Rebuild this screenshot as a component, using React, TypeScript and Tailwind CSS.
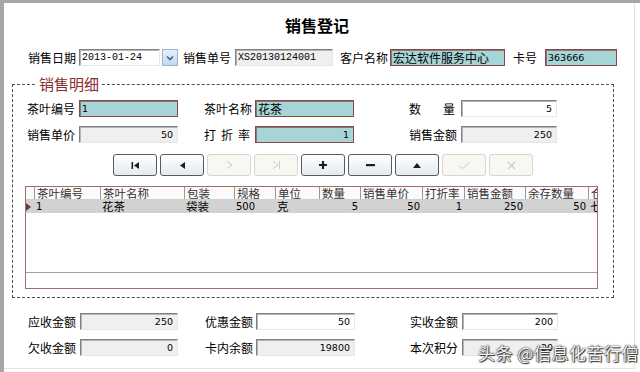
import React from "react";

type Variant = "teal" | "gray" | "white";

const cjk = "font-['Noto_Sans_CJK_SC','Noto_Sans',sans-serif]";

function Box({
  w, v, value = "", right = false, mono = false, small = false,
}: { w: string; v: Variant; value?: string; right?: boolean; mono?: boolean; small?: boolean }) {
  const look =
    v === "teal"
      ? "bg-[#a7d4d7] border border-[#8e4545] shadow-[inset_1px_1px_0_#7d7d7d]"
      : v === "gray"
      ? "bg-[#efefef] border border-t-[#7f7f7f] border-l-[#7f7f7f] border-r-[#e6e6e6] border-b-[#e6e6e6] shadow-[inset_1px_1px_0_#b5b5b5]"
      : "bg-white border border-t-[#7f7f7f] border-l-[#7f7f7f] border-r-[#e6e6e6] border-b-[#e6e6e6] shadow-[inset_1px_1px_0_#b5b5b5]";
  const font = mono
    ? "font-['Liberation_Mono',monospace] text-[10px]"
    : small
    ? "font-['DejaVu_Sans',sans-serif] text-[9.5px]"
    : `${cjk} text-[12px]`;
  return (
    <div
      className={`${w} h-[17px] ${look} ${font} flex items-center px-[2px] leading-none text-black ${
        right ? "justify-end pr-[4px]" : ""
      }`}
    >
      {value}
    </div>
  );
}

function Label({ text, spaced = false, w = "w-[48px]" }: { text: string; spaced?: boolean; w?: string }) {
  if (spaced) {
    return (
      <div className={`${w} flex justify-between text-[12px] text-black ${cjk} leading-none pr-[2px]`}>
        {text.split("").map((c, i) => (
          <span key={i}>{c}</span>
        ))}
      </div>
    );
  }
  return <div className={`${w} text-[12px] text-black ${cjk} leading-none whitespace-nowrap`}>{text}</div>;
}

function NavBtn({ on, children }: { on: boolean; children: React.ReactNode }) {
  return (
    <div
      className={`w-[44px] h-[22px] rounded-[3px] flex items-center justify-center ${
        on
          ? "border border-[#555c60] bg-gradient-to-b from-white to-[#e4eaee]"
          : "border border-[#d6d6ce] bg-[#f8f8f3]"
      }`}
    >
      {children}
    </div>
  );
}

const dark = "#1e1e1e";
const pale = "#c9c9c2";

const cols = [
  { t: "茶叶编号", w: 66, v: "1", r: false },
  { t: "茶叶名称", w: 84, v: "花茶", r: false },
  { t: "包装", w: 50, v: "袋装", r: false },
  { t: "规格", w: 41, v: "500", r: false },
  { t: "单位", w: 44, v: "克", r: false },
  { t: "数量", w: 41, v: "5", r: true },
  { t: "销售单价", w: 62, v: "50", r: true },
  { t: "打折率", w: 42, v: "1", r: true },
  { t: "销售金额", w: 61, v: "250", r: true },
  { t: "余存数量", w: 63, v: "50", r: true },
  { t: "仓库", w: 40, v: "七号库", r: false },
];

export default function App() {
  return (
    <div className="w-[640px] h-[372px] overflow-hidden bg-white border-t-[3px] border-l-[4px] border-[#a6a6a6] relative">
      <div className="w-[631px] h-[366px] border-r border-b border-[#e2e2e2]">
        {/* title */}
        <div className={`pt-[12px] h-[33px] text-center text-[16px] font-bold text-black ${cjk} leading-[20px] pr-[4px]`}>
          销售登记
        </div>

        {/* header row */}
        <div className="mt-[13px] ml-[24px] flex items-center h-[17px]">
          <Label text="销售日期" />
          <div className="ml-[3px]">
            <Box w="w-[81px]" v="white" value="2013-01-24" mono />
          </div>
          <div className="ml-[2px] w-[16px] h-[17px] border border-[#9db3cf] bg-gradient-to-b from-[#e6effb] to-[#c4d7f0] flex items-center justify-center">
            <svg width="8" height="6" viewBox="0 0 8 6">
              <path d="M1 1.5 L4 4.5 L7 1.5" fill="none" stroke="#3a5f99" strokeWidth="1.6" />
            </svg>
          </div>
          <div className="ml-[5px]">
            <Label text="销售单号" />
          </div>
          <div className="ml-[4px]">
            <Box w="w-[98px]" v="gray" value="XS20130124001" mono />
          </div>
          <div className="ml-[7px]">
            <Label text="客户名称" />
          </div>
          <div className="ml-[2px]">
            <Box w="w-[115px]" v="teal" value="宏达软件服务中心" />
          </div>
          <div className="ml-[8px]">
            <Label text="卡号" w="w-[24px]" />
          </div>
          <div className="ml-[8px]">
            <Box w="w-[72px]" v="teal" value="363666" small />
          </div>
        </div>

        {/* detail group */}
        <div className="relative mt-[18px] ml-[8px] w-[602px] h-[214px] border border-dashed border-[#4d4d4d]">
          <span className={`absolute -top-[11px] left-[24px] bg-white px-[2px] text-[15px] text-[#8a2d2d] ${cjk} leading-[20px]`}>
            销售明细
          </span>

          <div className="pt-[15px] pl-[14px] flex flex-col gap-[9px]">
            <div className="flex items-center h-[17px]">
              <Label text="茶叶编号" />
              <div className="ml-[4px]">
                <Box w="w-[99px]" v="teal" value="1" small />
              </div>
              <div className="ml-[26px]">
                <Label text="茶叶名称" />
              </div>
              <div className="ml-[3px]">
                <Box w="w-[99px]" v="teal" value="花茶" />
              </div>
              <div className="ml-[55px]">
                <Label text="数量" spaced />
              </div>
              <div className="ml-[4px]">
                <Box w="w-[96px]" v="white" value="5" right small />
              </div>
            </div>
            <div className="flex items-center h-[17px]">
              <Label text="销售单价" />
              <div className="ml-[4px]">
                <Box w="w-[99px]" v="gray" value="50" right small />
              </div>
              <div className="ml-[26px]">
                <Label text="打折率" spaced />
              </div>
              <div className="ml-[3px]">
                <Box w="w-[99px]" v="teal" value="1" right small />
              </div>
              <div className="ml-[55px]">
                <Label text="销售金额" />
              </div>
              <div className="ml-[4px]">
                <Box w="w-[96px]" v="gray" value="250" right small />
              </div>
            </div>
          </div>

          {/* navigator */}
          <div className="mt-[11px] ml-[100px] flex gap-[3px]">
            <NavBtn on>
              <svg width="9" height="7" viewBox="0 0 9 7">
                <rect x="0.5" y="0" width="1.6" height="7" fill={dark} />
                <path d="M8 0 L3 3.5 L8 7 Z" fill={dark} />
              </svg>
            </NavBtn>
            <NavBtn on>
              <svg width="7" height="7" viewBox="0 0 7 7">
                <path d="M6 0 L1 3.5 L6 7 Z" fill={dark} />
              </svg>
            </NavBtn>
            <NavBtn on={false}>
              <svg width="7" height="8" viewBox="0 0 7 8">
                <path d="M1 0.5 L6 4 L1 7.5" fill="none" stroke={pale} strokeWidth="1" />
              </svg>
            </NavBtn>
            <NavBtn on={false}>
              <svg width="9" height="8" viewBox="0 0 9 8">
                <path d="M1 0.5 L6 4 L1 7.5" fill="none" stroke={pale} strokeWidth="1" />
                <path d="M7.5 0 L7.5 8" stroke={pale} strokeWidth="1" />
              </svg>
            </NavBtn>
            <NavBtn on>
              <svg width="8" height="8" viewBox="0 0 8 8">
                <path d="M4 0 V8 M0 4 H8" stroke={dark} strokeWidth="2.2" />
              </svg>
            </NavBtn>
            <NavBtn on>
              <svg width="9" height="4" viewBox="0 0 9 4">
                <rect x="0" y="1" width="9" height="2.2" fill={dark} />
              </svg>
            </NavBtn>
            <NavBtn on>
              <svg width="8" height="5" viewBox="0 0 8 5">
                <path d="M0 5 L4 0 L8 5 Z" fill={dark} />
              </svg>
            </NavBtn>
            <NavBtn on={false}>
              <svg width="11" height="7" viewBox="0 0 11 7">
                <path d="M0.5 4 L3.5 6.5 L10.5 0.5" fill="none" stroke={pale} strokeWidth="1" />
              </svg>
            </NavBtn>
            <NavBtn on={false}>
              <svg width="9" height="9" viewBox="0 0 9 9">
                <path d="M1 1 L8 8 M8 1 L1 8" fill="none" stroke={pale} strokeWidth="1.2" />
              </svg>
            </NavBtn>
          </div>

          {/* grid */}
          <div className="mt-[10px] ml-[12px] w-[573px] h-[103px] border border-[#a56a6a] overflow-hidden flex flex-col">
            <div className={`flex h-[13px] ${cjk} text-[11.5px] leading-[12px] text-[#333] bg-[#fbfbfb] border-b border-[#cfcfcf] overflow-hidden`}>
              <div className="w-[8px] shrink-0" />
              {cols.map((c) => (
                <div key={c.t} style={{ width: c.w }} className="shrink-0 border-l border-[#9a9a9a] pl-[2px] whitespace-nowrap overflow-hidden">
                  {c.t}
                </div>
              ))}
            </div>
            <div className="flex h-[13px] bg-[#d2d2d2] text-[11px] leading-[13px] text-black overflow-hidden">
              <div className="w-[8px] shrink-0 flex items-center">
                <svg width="5" height="8" viewBox="0 0 5 8">
                  <path d="M0 0 L5 4 L0 8 Z" fill="#6d3c3c" />
                </svg>
              </div>
              {cols.map((c) => (
                <div
                  key={c.t}
                  style={{ width: c.w }}
                  className={`shrink-0 whitespace-nowrap overflow-hidden px-[2px] ${
                    /^[0-9]+$/.test(c.v) ? "font-['DejaVu_Sans',sans-serif] text-[10px]" : `${cjk} text-[11.5px] leading-[13px]`
                  } ${c.r ? "text-right" : "text-left"}`}
                >
                  {c.v}
                </div>
              ))}
            </div>
            <div className="flex-1" />
            <div className="h-[16px] border-t border-[#a0a0a0]" />
          </div>
        </div>

        {/* totals */}
        <div className="mt-[15px] ml-[24px] flex flex-col gap-[9px]">
          <div className="flex items-center h-[17px]">
            <Label text="应收金额" />
            <div className="ml-[4px]">
              <Box w="w-[98px]" v="gray" value="250" right small />
            </div>
            <div className="ml-[27px]">
              <Label text="优惠金额" />
            </div>
            <div className="ml-[3px]">
              <Box w="w-[99px]" v="white" value="50" right small />
            </div>
            <div className="ml-[55px]">
              <Label text="实收金额" />
            </div>
            <div className="ml-[4px]">
              <Box w="w-[96px]" v="white" value="200" right small />
            </div>
          </div>
          <div className="flex items-center h-[17px]">
            <Label text="欠收金额" />
            <div className="ml-[4px]">
              <Box w="w-[98px]" v="gray" value="0" right small />
            </div>
            <div className="ml-[27px]">
              <Label text="卡内余额" />
            </div>
            <div className="ml-[3px]">
              <Box w="w-[99px]" v="gray" value="19800" right small />
            </div>
            <div className="ml-[55px]">
              <Label text="本次积分" />
            </div>
            <div className="ml-[4px]">
              <Box w="w-[96px]" v="gray" value="20" right small />
            </div>
          </div>
        </div>
      </div>

      {/* watermark */}
      <span
        className={`absolute left-[474px] top-[340px] text-[17px] tracking-[0.5px] text-[#f4f4f4] ${cjk} leading-[20px] [text-shadow:0_0_1px_#222,0_0_2px_#444,1px_1px_1px_#333]`}
      >
        头条 @信息化苦行僧
      </span>
    </div>
  );
}
